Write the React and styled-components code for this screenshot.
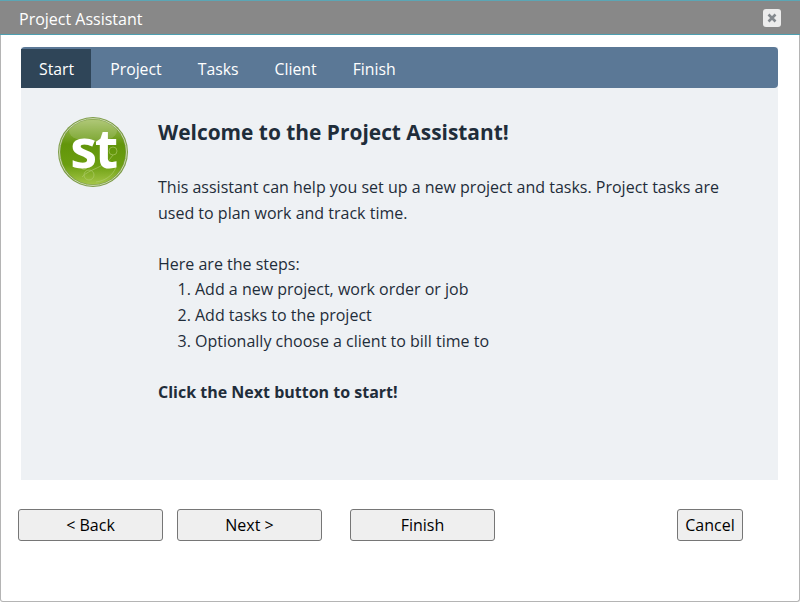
import React from 'react';
import styled, { createGlobalStyle } from 'styled-components';

const GlobalStyle = createGlobalStyle`
  html, body { margin: 0; padding: 0; background: #fff; }
  body { font-family: "Open Sans", "Noto Sans", "Liberation Sans", sans-serif; }
`;

const Dialog = styled.div`
  box-sizing: border-box;
  width: 800px;
  height: 602px;
  background: #fff;
  border: 1px solid #b4b4b4;
  border-top: 0;
  border-radius: 0 0 3px 3px;
  display: flex;
  flex-direction: column;
`;

const TitleBar = styled.div`
  box-sizing: border-box;
  height: 35px;
  background: #888;
  border-top: 1px solid #5ba6b5;
  border-bottom: 1px solid #4d9fb0;
  margin: 0 -1px;
  padding: 0 19px;
  display: flex;
  align-items: center;
  justify-content: space-between;
  color: #fff;
  font-size: 16px;
`;

const TitleText = styled.span`
  padding-top: 2px;
`;

const CloseButton = styled.div`
  width: 18px;
  height: 18px;
  border-radius: 3px;
  background: #ececec;
  display: flex;
  align-items: center;
  justify-content: center;
`;

const Wizard = styled.div`
  margin: 12px 21px 0 20px;
  height: 433px;
  background: #eef1f4;
  display: flex;
  flex-direction: column;
`;

const TabBar = styled.div`
  box-sizing: border-box;
  height: 41px;
  padding-top: 2px;
  background: #5b7896;
  border-radius: 4px 4px 4px 0;
  display: flex;
`;

const Tab = styled.div`
  height: 39px;
  padding: ${p => (p.$active ? '0 17px 0 18px' : '0 18px')};
  margin-right: ${p => (p.$active ? 1 : 0)}px;
  color: #fff;
  font-size: 15.8px;
  line-height: 40px;
  background: ${p => (p.$active ? '#2f4558' : 'transparent')};
`;

const Body = styled.div`
  padding: 29px 0 0 37px;
  display: flex;
  gap: 29px;
  color: #1f2d3a;
`;

const Logo = styled.svg`
  width: 71px;
  height: 71px;
  flex: none;
  overflow: visible;
`;

const Copy = styled.div`
  font-size: 16px;
  line-height: 25.6px;
  width: 575px;
`;

const Heading = styled.h1`
  margin: 0 0 28px;
  font-size: 20.9px;
  line-height: 30px;
  font-weight: 700;
`;

const Paragraph = styled.p`
  margin: 0 0 25.6px;
`;

const Steps = styled.ol`
  margin: 0 0 25.6px;
  padding: 0 0 0 37px;
`;

const Footer = styled.div`
  margin-top: 29px;
  padding-left: 17px;
  display: flex;
`;

const Button = styled.button`
  box-sizing: border-box;
  width: ${p => p.$width || 145}px;
  height: 32px;
  margin-left: ${p => p.$gap || 0}px;
  padding: 0;
  background: #efefef;
  border: 1px solid #767676;
  border-radius: 3px;
  color: #000;
  font-family: inherit;
  font-size: 16px;
`;

function StLogo() {
  return (
    <Logo viewBox="0 0 71 71">
      <defs>
        <linearGradient id="ball" x1="0" y1="0" x2="0" y2="1">
          <stop offset="0" stopColor="#a3bf62" />
          <stop offset="0.38" stopColor="#62950a" />
          <stop offset="0.7" stopColor="#6b9e10" />
          <stop offset="1" stopColor="#a5c648" />
        </linearGradient>
      </defs>
      <circle cx="35" cy="35" r="35" fill="#7d9c48" />
      <circle cx="35" cy="35" r="33.5" fill="none" stroke="#c9d8a8" strokeWidth="1" />
      <circle cx="35" cy="35" r="32.5" fill="url(#ball)" />
      <ellipse cx="35" cy="14" rx="24" ry="11" fill="#fff" opacity="0.14" />
      <g fill="none" stroke="#b4cf72" strokeWidth="0.8" opacity="0.75">
        <path d="M24 60c8-9 22-8 31-22" />
        <circle cx="31" cy="58" r="5" />
        <circle cx="26" cy="50" r="2.5" />
        <circle cx="55" cy="34" r="4" />
        <path d="M38 65c8-1 17-6 20-15" />
      </g>
      <text x="35" y="51" textAnchor="middle" fill="#fff" fontSize="54" fontWeight="700" fontFamily="'Open Sans', sans-serif" letterSpacing="-2.5">st</text>
    </Logo>
  );
}

export default function App() {
  return (
    <>
      <GlobalStyle />
      <Dialog>
        <TitleBar>
          <TitleText>Project Assistant</TitleText>
          <CloseButton>
            <svg width="12" height="12" viewBox="0 0 12 12">
              <path d="M2.5 2.5l7 7M9.5 2.5l-7 7" stroke="#84898e" strokeWidth="2.6" />
            </svg>
          </CloseButton>
        </TitleBar>
        <Wizard>
          <TabBar>
            <Tab $active>Start</Tab>
            <Tab>Project</Tab>
            <Tab>Tasks</Tab>
            <Tab>Client</Tab>
            <Tab>Finish</Tab>
          </TabBar>
          <Body>
            <StLogo />
            <Copy>
              <Heading>Welcome to the Project Assistant!</Heading>
              <Paragraph>
                This assistant can help you set up a new project and tasks. Project tasks are used to plan work and track time.
              </Paragraph>
              <div>Here are the steps:</div>
              <Steps>
                <li>Add a new project, work order or job</li>
                <li>Add tasks to the project</li>
                <li>Optionally choose a client to bill time to</li>
              </Steps>
              <strong>Click the Next button to start!</strong>
            </Copy>
          </Body>
        </Wizard>
        <Footer>
          <Button>&lt; Back</Button>
          <Button $gap={14}>Next &gt;</Button>
          <Button $gap={28}>Finish</Button>
          <Button $gap={182} $width={66}>Cancel</Button>
        </Footer>
      </Dialog>
    </>
  );
}
